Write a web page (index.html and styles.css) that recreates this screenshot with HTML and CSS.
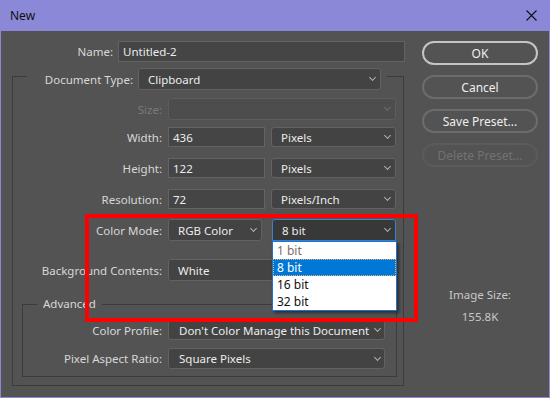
FILE: index.html
```html
<!DOCTYPE html>
<html lang="en">
<head>
    <meta charset="UTF-8">
    <title>New</title>
    <link rel="stylesheet" href="styles.css">
</head>
<body>
    <div class="window">
        <div class="titlebar">
            <span class="title">New</span>
            <span class="close">
                <svg width="11" height="11" viewBox="0 0 11 11"><path d="M0.5 0.5 L10.5 10.5 M10.5 0.5 L0.5 10.5" stroke="#111" stroke-width="1.1" fill="none"/></svg>
            </span>
        </div>

        <div class="content">
            <div class="form">
                <div class="row name-row">
                    <span class="lbl name-lbl">Name:</span>
                    <div class="field input name-input">Untitled-2</div>
                </div>

                <fieldset class="group doc-group">
                    <legend class="doc-legend">
                        <span class="lbl doc-lbl">Document Type:</span>
                        <div class="field select doc-select">Clipboard</div>
                    </legend>

                    <div class="row r-size">
                        <span class="lbl off">Size:</span>
                        <div class="field select wide disabled"></div>
                    </div>
                    <div class="row r-width">
                        <span class="lbl">Width:</span>
                        <div class="field input num">436</div>
                        <div class="field select unit">Pixels</div>
                    </div>
                    <div class="row r-height">
                        <span class="lbl">Height:</span>
                        <div class="field input num">122</div>
                        <div class="field select unit">Pixels</div>
                    </div>
                    <div class="row r-res">
                        <span class="lbl">Resolution:</span>
                        <div class="field input num">72</div>
                        <div class="field select unit">Pixels/Inch</div>
                    </div>
                    <div class="row r-mode">
                        <span class="lbl">Color Mode:</span>
                        <div class="field select mode">RGB Color</div>
                        <div class="field select depth open">8 bit</div>
                    </div>
                    <div class="row r-bg">
                        <span class="lbl">Background Contents:</span>
                        <div class="field select wide">White</div>
                    </div>

                    <fieldset class="group adv-group">
                        <legend class="adv-legend">Advanced</legend>
                        <div class="row r-profile">
                            <span class="lbl">Color Profile:</span>
                            <div class="field select adv">Don't Color Manage this Document</div>
                        </div>
                        <div class="row r-aspect">
                            <span class="lbl">Pixel Aspect Ratio:</span>
                            <div class="field select adv">Square Pixels</div>
                        </div>
                    </fieldset>
                </fieldset>
            </div>

            <div class="side">
                <button class="btn primary">OK</button>
                <button class="btn">Cancel</button>
                <button class="btn">Save Preset...</button>
                <button class="btn" disabled>Delete Preset...</button>
                <div class="image-size">
                    <div>Image Size:</div>
                    <div class="size-val">155.8K</div>
                </div>
            </div>
        </div>

        <ul class="dropdown">
            <li class="dim">1 bit</li>
            <li class="current">8 bit</li>
            <li>16 bit</li>
            <li>32 bit</li>
        </ul>

        <div class="highlight"></div>
    </div>
</body>
</html>
```

FILE: styles.css
```css
body {
    margin: 0;
    background: #535353;
    font-family: "Noto Sans", "Open Sans", sans-serif;
    font-size: 11.5px;
}
.window {
    position: relative;
    width: 550px;
    height: 398px;
    box-sizing: border-box;
    background: #535353;
    border: 1px solid #8b88d8;
    border-top: none;
    overflow: hidden;
}
.titlebar {
    height: 31px;
    background: #8b88d8;
    display: flex;
    align-items: center;
    justify-content: space-between;
    padding: 0 12px 0 9px;
}
.title {
    color: #111;
    font-size: 12px;
}
.close {
    display: flex;
}

.content {
    display: flex;
    padding-top: 10px;
}
.form {
    width: 393px;
    margin-left: 11px;
}
.row {
    display: flex;
    align-items: center;
    gap: 6px;
}
.lbl {
    color: #d8d8d8;
    text-align: right;
    white-space: nowrap;
    flex: none;
}
.lbl.off {
    color: #7a7a7a;
}
.field {
    box-sizing: border-box;
    height: 20px;
    color: #ececec;
    white-space: nowrap;
    overflow: hidden;
    display: flex;
    align-items: center;
    flex: none;
}
.input {
    background: #454545;
    border: 1px solid #636363;
    padding-left: 4px;
}
.select {
    background: #434343;
    border: 1px solid #626262;
    border-radius: 3px;
    padding-left: 9px;
}
.select::after {
    content: "";
    width: 4px;
    height: 4px;
    border-right: 1px solid #b0b0b0;
    border-bottom: 1px solid #b0b0b0;
    transform: rotate(45deg);
    margin: -3px 5px 0 auto;
    flex: none;
}
.select.disabled {
    background: #4d4d4d;
    border-color: #5d5d5d;
}
.select.disabled::after {
    border-color: #6e6e6e;
}

.name-row {
    gap: 5px;
    height: 21px;
}
.name-lbl {
    width: 101px;
}
.name-input {
    width: 287px;
    height: 21px;
}

.group {
    margin: 0 1px 0 0;
    padding: 0;
    min-width: 0;
    border: 1px solid #3b3b3b;
}
.doc-legend {
    display: flex;
    align-items: center;
    gap: 5px;
    margin-left: 14px;
    padding: 6px 6px 0 14px;
}
.doc-lbl {
    width: 92px;
}
.doc-select {
    width: 243px;
    height: 22px;
}

.doc-group > .row .lbl {
    width: 149px;
}
.wide {
    width: 228px;
    height: 22px;
}
.num {
    width: 97px;
}
.unit {
    width: 125px;
}
.mode {
    width: 94px;
    height: 22px;
}
.depth {
    width: 124px;
    height: 22px;
    margin-left: 4px;
}
.depth.open {
    background: #383838;
    border-color: #3d80d0;
    border-radius: 3px 3px 0 0;
}
.r-size { margin-top: 8px; }
.r-width { margin-top: 7px; }
.r-height { margin-top: 11px; }
.r-res { margin-top: 11px; }
.r-mode { margin-top: 10px; }
.r-bg { margin-top: 18px; }

.adv-group {
    margin: 15px 6px 8px 9px;
}
.adv-legend {
    margin-left: 14px;
    padding: 0 6px;
    line-height: 16px;
    color: #d8d8d8;
}
.adv-group .lbl {
    width: 139px;
}
.adv {
    width: 217px;
    height: 20px;
    padding-left: 10px;
}
.adv::after {
    margin-right: 4px;
}
.r-aspect .adv {
    height: 21px;
}
.r-profile { margin-top: 8px; }
.r-aspect { margin-top: 8px; margin-bottom: 7px; }

.side {
    width: 116px;
    margin-left: 17px;
    display: flex;
    flex-direction: column;
    gap: 10px;
}
.btn {
    height: 24px;
    border-radius: 12px;
    border: 2px solid #6c6c6c;
    background: #535353;
    color: #eeeeee;
    font-family: inherit;
    font-size: 12px;
    padding: 0;
}
.btn.primary {
    border-color: #c4c4c4;
}
.btn:disabled {
    border-color: #5b5b5b;
    color: #727272;
}
.image-size {
    margin-top: 110px;
    text-align: center;
    color: #c8c8c8;
    line-height: 16px;
}
.size-val {
    margin-top: 6px;
}

.dropdown {
    position: absolute;
    left: 271px;
    top: 241px;
    width: 125px;
    margin: 0;
    padding: 0;
    list-style: none;
    background: #fff;
    border: 1px solid #1a74d0;
    box-sizing: border-box;
    box-shadow: 2px 2px 3px rgba(0, 0, 0, 0.45);
    font-size: 12px;
}
.dropdown li {
    height: 17px;
    line-height: 17px;
    padding-left: 4px;
    color: #111;
}
.dropdown li.dim {
    color: #7c6e6e;
}
.dropdown li.current {
    background: #0078d7;
    color: #fff;
    outline: 1px dotted #e6b77c;
    outline-offset: -1px;
}

.highlight {
    position: absolute;
    left: 84px;
    top: 214px;
    width: 333px;
    height: 108px;
    box-sizing: border-box;
    border: 4px solid #ff0000;
    pointer-events: none;
}
```
